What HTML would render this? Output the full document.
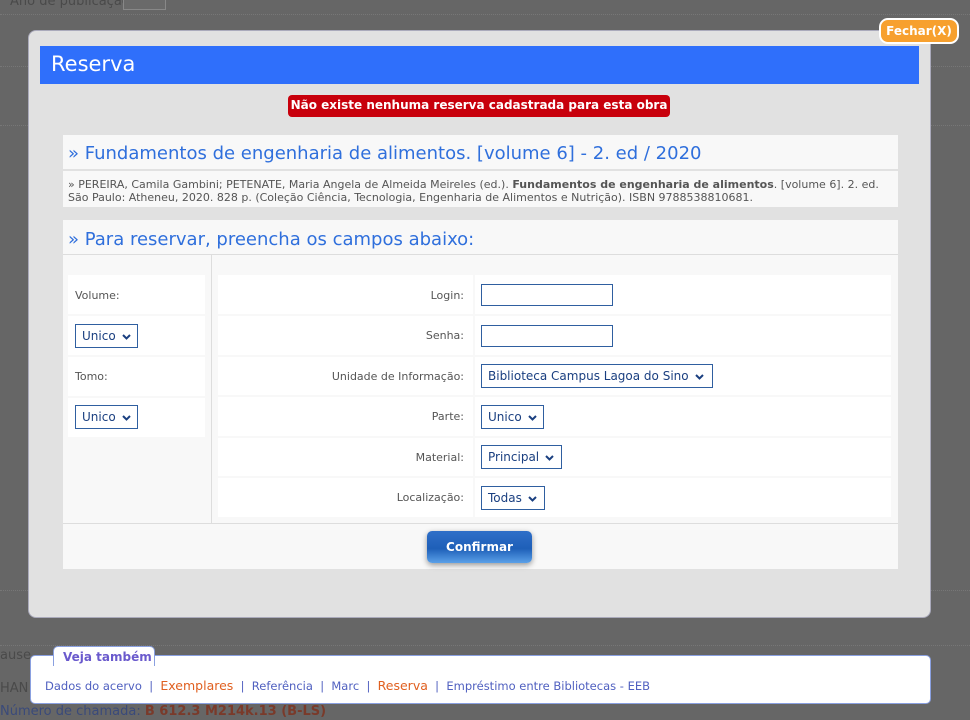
<!DOCTYPE html>
<html><head><meta charset="utf-8"><style>
*{box-sizing:border-box;margin:0;padding:0}
body{width:970px;height:720px;background:#666;font-family:"DejaVu Sans","Liberation Sans",sans-serif;position:relative;overflow:hidden;font-size:12px;color:#444}
.a{position:absolute}
.bgt{color:#4a4a4a;font-size:13px;white-space:nowrap}
.line{position:absolute;left:0;width:970px;border-top:1px dotted #777}
.modal{left:28px;top:30px;width:903px;height:588px;background:#e1e1e1;border:1px solid #aab;border-radius:8px}
.hdr{left:40px;top:46px;width:879px;height:38px;background:#2f6ffb;color:#fff;font-size:21px;padding:6px 11px}
.badge{left:288px;top:95px;width:382px;height:22px;background:#c8000c;color:#fff;font-weight:bold;font-size:12px;text-align:center;line-height:21px;border-radius:4px;white-space:nowrap}
.box{background:#f8f8f8}
.t{color:#2f6fdc;font-size:18px}
.sel{position:absolute;border:1px solid #2f5fa0;background:#fff;color:#1a3f80;font-size:12px;height:24px;line-height:22px;padding-left:6px;white-space:nowrap}
.sel svg{margin-left:6px;vertical-align:middle}
.inp{position:absolute;border:1px solid #2f5fa0;background:#fff;width:132px;height:22px}
.cell{position:absolute;background:#fff}
.lbl{position:absolute;font-size:11px;color:#555;text-align:right;width:245px}
</style></head><body>
<div class="a bgt" style="left:10px;top:-6px">Ano de publicação:</div>
<div class="a" style="left:123px;top:-4px;width:43px;height:14px;border:1px solid #888;background:#6a6a6a"></div>
<div class="line" style="top:14px"></div><div class="line" style="top:66px"></div><div class="line" style="top:125px"></div>
<div class="line" style="top:590px"></div><div class="line" style="top:645px"></div>
<div class="a bgt" style="left:0;top:704px;color:#3a4a7a">Número de chamada: <span style="color:#7a3a2a;font-weight:bold">B 612.3 M214k.13 (B-LS)</span></div>
<div class="a bgt" style="left:0;top:648px">ause</div><div class="a bgt" style="left:0;top:681px">HAN</div>

<div class="a modal"></div>
<div class="a hdr">Reserva</div>
<div class="a" style="left:879px;top:18px;width:80px;height:26px;background:#f7a02e;border:2px solid #fff;border-radius:9px;color:#fff;font-weight:bold;font-size:12px;text-align:center;line-height:22px">Fechar(X)</div>
<div class="a badge">Não existe nenhuma reserva cadastrada para esta obra</div>

<div class="a box" style="left:63px;top:135px;width:835px;height:34px"></div>
<div class="a t" style="left:68px;top:143px;white-space:nowrap">» Fundamentos de engenharia de alimentos. [volume 6] - 2. ed / 2020</div>
<div class="a box" style="left:63px;top:171px;width:835px;height:36px;font-size:11px;color:#555;padding:7px 5px;line-height:13px">» PEREIRA, Camila Gambini; PETENATE, Maria Angela de Almeida Meireles (ed.). <b>Fundamentos de engenharia de alimentos</b>. [volume 6]. 2. ed. São Paulo: Atheneu, 2020. 828 p. (Coleção Ciência, Tecnologia, Engenharia de Alimentos e Nutrição). ISBN 9788538810681.</div>

<div class="a box" style="left:63px;top:220px;width:835px;height:349px"></div>
<div class="a t" style="left:68px;top:229px;white-space:nowrap">» Para reservar, preencha os campos abaixo:</div>
<div class="a" style="left:63px;top:254px;width:835px;border-top:1px solid #ddd"></div>
<div class="a" style="left:211px;top:255px;height:268px;border-left:1px solid #ddd"></div>
<div class="a" style="left:63px;top:523px;width:835px;border-top:1px solid #ddd"></div>

<div class="cell" style="left:68px;top:275px;width:137px;height:39px"></div>
<div class="cell" style="left:68px;top:316px;width:137px;height:39px"></div>
<div class="cell" style="left:68px;top:357px;width:137px;height:39px"></div>
<div class="cell" style="left:68px;top:398px;width:137px;height:39px"></div>
<div class="a" style="left:75px;top:289px;font-size:11px;color:#555">Volume:</div>
<div class="sel" style="left:75px;top:324px;width:63px">Unico<svg width="9" height="6" viewBox="0 0 9 6"><path d="M1 1l3.5 3.5L8 1" fill="none" stroke="#1a3f80" stroke-width="2"/></svg></div>
<div class="a" style="left:75px;top:370px;font-size:11px;color:#555">Tomo:</div>
<div class="sel" style="left:75px;top:405px;width:63px">Unico<svg width="9" height="6" viewBox="0 0 9 6"><path d="M1 1l3.5 3.5L8 1" fill="none" stroke="#1a3f80" stroke-width="2"/></svg></div>

<div class="cell" style="left:218px;top:275px;width:255px;height:39px"></div><div class="cell" style="left:475px;top:275px;width:416px;height:39px"></div>
<div class="cell" style="left:218px;top:316px;width:255px;height:39px"></div><div class="cell" style="left:475px;top:316px;width:416px;height:39px"></div>
<div class="cell" style="left:218px;top:357px;width:255px;height:38px"></div><div class="cell" style="left:475px;top:357px;width:416px;height:38px"></div>
<div class="cell" style="left:218px;top:397px;width:255px;height:39px"></div><div class="cell" style="left:475px;top:397px;width:416px;height:39px"></div>
<div class="cell" style="left:218px;top:438px;width:255px;height:38px"></div><div class="cell" style="left:475px;top:438px;width:416px;height:38px"></div>
<div class="cell" style="left:218px;top:478px;width:255px;height:39px"></div><div class="cell" style="left:475px;top:478px;width:416px;height:39px"></div>

<div class="lbl" style="left:219px;top:289px">Login:</div><div class="inp" style="left:481px;top:284px"></div>
<div class="lbl" style="left:219px;top:329px">Senha:</div><div class="inp" style="left:481px;top:325px"></div>
<div class="lbl" style="left:219px;top:370px">Unidade de Informação:</div><div class="sel" style="left:481px;top:364px;width:232px">Biblioteca Campus Lagoa do Sino<svg width="9" height="6" viewBox="0 0 9 6"><path d="M1 1l3.5 3.5L8 1" fill="none" stroke="#1a3f80" stroke-width="2"/></svg></div>
<div class="lbl" style="left:219px;top:410px">Parte:</div><div class="sel" style="left:481px;top:405px;width:63px">Unico<svg width="9" height="6" viewBox="0 0 9 6"><path d="M1 1l3.5 3.5L8 1" fill="none" stroke="#1a3f80" stroke-width="2"/></svg></div>
<div class="lbl" style="left:219px;top:451px">Material:</div><div class="sel" style="left:481px;top:445px;width:81px">Principal<svg width="9" height="6" viewBox="0 0 9 6"><path d="M1 1l3.5 3.5L8 1" fill="none" stroke="#1a3f80" stroke-width="2"/></svg></div>
<div class="lbl" style="left:219px;top:491px">Localização:</div><div class="sel" style="left:481px;top:486px;width:64px">Todas<svg width="9" height="6" viewBox="0 0 9 6"><path d="M1 1l3.5 3.5L8 1" fill="none" stroke="#1a3f80" stroke-width="2"/></svg></div>

<div class="a" style="left:427px;top:531px;width:105px;height:32px;border-radius:5px;background:linear-gradient(#2f6fc8,#1e5fb8 55%,#5aa0e8);color:#fff;font-weight:bold;font-size:12px;text-align:center;line-height:32px;box-shadow:0 2px 6px rgba(0,0,0,.4)">Confirmar</div>

<div class="a" style="left:30px;top:655px;width:901px;height:49px;background:#fff;border:1px solid #8aa0e0;border-radius:5px"></div>
<div class="a" style="left:53px;top:646px;width:102px;height:20px;background:#fff;border:1px solid #8aa0e0;border-bottom:none;border-radius:5px 5px 0 0;color:#6a5acd;font-weight:bold;font-size:12px;padding:3px 9px;white-space:nowrap">Veja também</div>
<div class="a" style="left:45px;top:678px;font-size:11.5px;color:#5060c0;white-space:nowrap">Dados do acervo &nbsp;| &nbsp;<span style="color:#e06020;font-size:12.5px">Exemplares</span> &nbsp;| &nbsp;Referência &nbsp;| &nbsp;Marc &nbsp;| &nbsp;<span style="color:#e06020;font-size:12.5px">Reserva</span> &nbsp;| &nbsp;Empréstimo entre Bibliotecas - EEB</div>
</body></html>
